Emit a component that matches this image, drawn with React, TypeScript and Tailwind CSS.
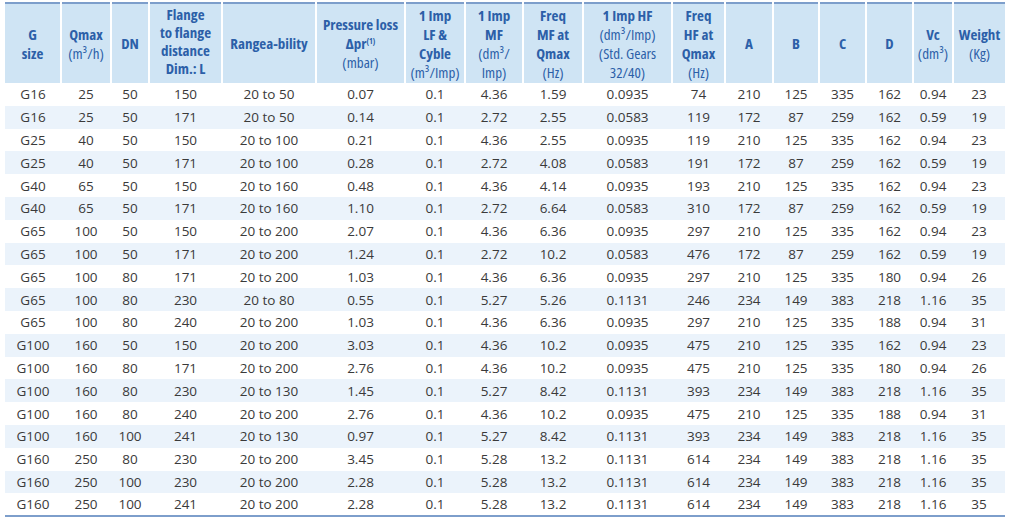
import React from 'react';

type Head = { bold: string[]; light?: string[] };

const widths = [56, 50, 38, 73, 94, 89, 60, 58, 60, 89, 53, 48, 46, 47, 47, 40, 52];

const heads: (Head | 'dp')[] = [
  { bold: ['G', 'size'] },
  { bold: ['Qmax'], light: ['(m³/h)'] },
  { bold: ['DN'] },
  { bold: ['Flange', 'to flange', 'distance', 'Dim.: L'] },
  { bold: ['Rangea-bility'] },
  'dp',
  { bold: ['1 Imp', 'LF &', 'Cyble'], light: ['(m³/Imp)'] },
  { bold: ['1 Imp', 'MF'], light: ['(dm³/', 'Imp)'] },
  { bold: ['Freq', 'MF at', 'Qmax'], light: ['(Hz)'] },
  { bold: ['1 Imp HF'], light: ['(dm³/Imp)', '(Std. Gears', '32/40)'] },
  { bold: ['Freq', 'HF at', 'Qmax'], light: ['(Hz)'] },
  { bold: ['A'] },
  { bold: ['B'] },
  { bold: ['C'] },
  { bold: ['D'] },
  { bold: ['Vc'], light: ['(dm³)'] },
  { bold: ['Weight'], light: ['(Kg)'] },
];

const rows: string[][] = [
  ['G16', '25', '50', '150', '20 to 50', '0.07', '0.1', '4.36', '1.59', '0.0935', '74', '210', '125', '335', '162', '0.94', '23'],
  ['G16', '25', '50', '171', '20 to 50', '0.14', '0.1', '2.72', '2.55', '0.0583', '119', '172', '87', '259', '162', '0.59', '19'],
  ['G25', '40', '50', '150', '20 to 100', '0.21', '0.1', '4.36', '2.55', '0.0935', '119', '210', '125', '335', '162', '0.94', '23'],
  ['G25', '40', '50', '171', '20 to 100', '0.28', '0.1', '2.72', '4.08', '0.0583', '191', '172', '87', '259', '162', '0.59', '19'],
  ['G40', '65', '50', '150', '20 to 160', '0.48', '0.1', '4.36', '4.14', '0.0935', '193', '210', '125', '335', '162', '0.94', '23'],
  ['G40', '65', '50', '171', '20 to 160', '1.10', '0.1', '2.72', '6.64', '0.0583', '310', '172', '87', '259', '162', '0.59', '19'],
  ['G65', '100', '50', '150', '20 to 200', '2.07', '0.1', '4.36', '6.36', '0.0935', '297', '210', '125', '335', '162', '0.94', '23'],
  ['G65', '100', '50', '171', '20 to 200', '1.24', '0.1', '2.72', '10.2', '0.0583', '476', '172', '87', '259', '162', '0.59', '19'],
  ['G65', '100', '80', '171', '20 to 200', '1.03', '0.1', '4.36', '6.36', '0.0935', '297', '210', '125', '335', '180', '0.94', '26'],
  ['G65', '100', '80', '230', '20 to 80', '0.55', '0.1', '5.27', '5.26', '0.1131', '246', '234', '149', '383', '218', '1.16', '35'],
  ['G65', '100', '80', '240', '20 to 200', '1.03', '0.1', '4.36', '6.36', '0.0935', '297', '210', '125', '335', '188', '0.94', '31'],
  ['G100', '160', '50', '150', '20 to 200', '3.03', '0.1', '4.36', '10.2', '0.0935', '475', '210', '125', '335', '162', '0.94', '23'],
  ['G100', '160', '80', '171', '20 to 200', '2.76', '0.1', '4.36', '10.2', '0.0935', '475', '210', '125', '335', '180', '0.94', '26'],
  ['G100', '160', '80', '230', '20 to 130', '1.45', '0.1', '5.27', '8.42', '0.1131', '393', '234', '149', '383', '218', '1.16', '35'],
  ['G100', '160', '80', '240', '20 to 200', '2.76', '0.1', '4.36', '10.2', '0.0935', '475', '210', '125', '335', '188', '0.94', '31'],
  ['G100', '160', '100', '241', '20 to 130', '0.97', '0.1', '5.27', '8.42', '0.1131', '393', '234', '149', '383', '218', '1.16', '35'],
  ['G160', '250', '80', '230', '20 to 200', '3.45', '0.1', '5.28', '13.2', '0.1131', '614', '234', '149', '383', '218', '1.16', '35'],
  ['G160', '250', '100', '230', '20 to 200', '2.28', '0.1', '5.28', '13.2', '0.1131', '614', '234', '149', '383', '218', '1.16', '35'],
  ['G160', '250', '100', '241', '20 to 200', '2.28', '0.1', '5.28', '13.2', '0.1131', '614', '234', '149', '383', '218', '1.16', '35'],
];

export default function App() {
  return (
    <div className="w-[1009px] h-[524px] bg-white pt-[2px] px-[5px] overflow-hidden">
      <table
        className="w-[1000px] table-fixed border-collapse border-t-2 border-b-2 border-[#7d9ecb]"
        style={{ fontFamily: '"Open Sans", sans-serif' }}
      >
        <colgroup>
          {widths.map((w, i) => (
            <col key={i} style={{ width: w }} />
          ))}
        </colgroup>
        <thead>
          <tr className="h-[80px] bg-[#cfe4f4]">
            {heads.map((h, i) => (
              <th
                key={i}
                className={`p-0 align-middle text-center text-[#2c5fa8] text-[15px] font-stretch-condensed whitespace-nowrap ${
                  i === 3 ? 'leading-[18px] pb-[5px]' : 'leading-[19px]'
                } ${i > 0 ? 'border-l-2 border-white' : ''}`}
              >
                {h === 'dp' ? (
                  <>
                    <div className="font-bold">Pressure loss</div>
                    <div className="font-bold">
                      Δpr<sup className="relative -top-[5px] text-[8px] leading-none align-baseline font-bold">(1)</sup>
                    </div>
                    <div className="font-normal">(mbar)</div>
                  </>
                ) : (
                  <>
                    {h.bold.map((t, j) => (
                      <div key={'b' + j} className="font-bold">
                        {t}
                      </div>
                    ))}
                    {h.light?.map((t, j) => (
                      <div key={'l' + j} className="font-normal">
                        {t}
                      </div>
                    ))}
                  </>
                )}
              </th>
            ))}
          </tr>
        </thead>
        <tbody>
          {rows.map((r, i) => (
            <tr key={i} className={`h-[22.8px] ${i % 2 === 1 ? 'bg-[#ebf3fb]' : 'bg-white'}`}>
              {r.map((c, j) => (
                <td
                  key={j}
                  className="p-0 text-center align-middle text-[13.5px] leading-[16px] font-stretch-92% text-[#3a3a3a] whitespace-nowrap"
                >
                  {c}
                </td>
              ))}
            </tr>
          ))}
        </tbody>
      </table>
    </div>
  );
}
